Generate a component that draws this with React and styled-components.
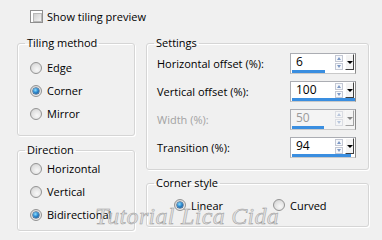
import React from 'react';
import styled, { createGlobalStyle } from 'styled-components';

const Global = createGlobalStyle`
  body { margin: 0; background: #f0f0f0; }
  * { box-sizing: border-box; }
`;

const Dialog = styled.div`
  position: relative; width: 382px; height: 240px; overflow: hidden;
  background: #f0f0f0; padding: 10px 13px 0 17px;
  font-family: "Open Sans", "Noto Sans", sans-serif; font-size: 11px; color: #000;
`;

const CheckRow = styled.label`
  display: flex; align-items: center; gap: 4px; height: 13px; margin-left: 13px;
`;

const CheckBox = styled.span`
  width: 13px; height: 13px; border: 1px solid #8f8f8f; background: #fff; padding: 2px;
  &::after {
    content: ''; display: block; width: 100%; height: 100%;
    background: linear-gradient(135deg, #cfcfcf, #f4f4f4); border: 1px solid #b8b8b8;
  }
`;

const Columns = styled.div`
  display: flex; gap: 11px; margin-top: 13px;
`;

const Column = styled.div`
  display: flex; flex-direction: column; gap: ${p => p.gap}px; width: ${p => p.width}px;
`;

const Group = styled.fieldset`
  margin: 0; padding: 0; min-width: 0;
  border: 1px solid #d5d5d5; border-radius: 3px;
  box-shadow: inset 1px 1px 0 #fff, 1px 1px 0 #fff;
`;

const Legend = styled.legend`
  margin: 0 0 0 7px; padding: 0 2px; line-height: 14px; height: 14px;
`;

const GroupBody = styled.div`
  padding: ${p => p.pad};
`;

const RadioRow = styled.label`
  display: flex; align-items: center; gap: 5px; height: ${p => p.h || 23}px;
  width: ${p => (p.w ? `${p.w}px` : 'auto')};
`;

const Radio = styled.span`
  position: relative; width: 12px; height: 12px; border-radius: 50%; flex: none;
  border: 1px solid #939393;
  background: radial-gradient(circle at 60% 65%, #f8f8f8 0%, #e2e2e2 55%, #c9c9c9 100%);
  &::after {
    content: ''; position: absolute; left: 2px; top: 2px; width: 6px; height: 6px; border-radius: 50%;
    display: ${p => (p.checked ? 'block' : 'none')};
    background: radial-gradient(circle at 40% 35%, #8fe0ff 0%, #2d8ad0 45%, #0d3f78 100%);
    box-shadow: 0 0 0 0.5px #0e3a6a;
  }
`;

const Inline = styled.div`
  display: flex; align-items: center;
`;

const SettingRow = styled.div`
  display: flex; align-items: center; justify-content: space-between; height: 21px;
  color: ${p => (p.disabled ? '#a2a2a2' : '#000')};
`;

const Rows = styled.div`
  display: flex; flex-direction: column; gap: 7px;
`;

const Spin = styled.div`
  position: relative; width: 66px; height: 21px; display: flex; align-items: center;
  border: 1px solid #abadb3; border-right-color: #8a8a8a; border-bottom-color: #c9c9c9;
  background: ${p => (p.disabled ? '#f4f4f4' : '#fff')};
  color: ${p => (p.disabled ? '#9a9a9a' : '#000')};
  font-size: 12px; padding: 0 0 3px 5px;
`;

const SpinValue = styled.span`
  flex: 1; line-height: 16px;
`;

const Arrows = styled.div`
  display: flex; flex-direction: column; gap: 1px; width: 8px; margin-right: 2px;
  opacity: ${p => (p.disabled ? 0.5 : 1)};
`;

const ArrowBtn = styled.span`
  display: flex; align-items: center; justify-content: center;
  width: 8px; height: 7px; border: 1px solid #c4c8d4; background: #f6f8fb;
  &::after {
    content: ''; border-left: 2.5px solid transparent; border-right: 2.5px solid transparent;
    ${p => (p.down ? 'border-top: 3px solid #7d98c4;' : 'border-bottom: 3px solid #7d98c4;')}
  }
`;

const DropBtn = styled.span`
  display: flex; align-items: center; justify-content: center;
  width: 9px; height: 16px; margin-right: 1px; background: #f4f4f4;
  border-top: 1px solid #fff; border-left: 1px solid #fff;
  border-right: 1px solid #404040; border-bottom: 1px solid #404040;
  opacity: ${p => (p.disabled ? 0.45 : 1)};
  &::after {
    content: ''; border-left: 3px solid transparent; border-right: 3px solid transparent;
    border-top: 3px solid #000;
  }
`;

const Bar = styled.span`
  position: absolute; left: 1px; bottom: 0; height: 3px; background: #3a8ee0;
`;

const Watermark = styled.div`
  position: absolute; left: 95px; top: 203px;
  font-family: "Liberation Serif", serif; font-style: italic; font-size: 24px;
  letter-spacing: 0.3px; color: rgba(215, 215, 215, 0.55);
  -webkit-text-stroke: 0.5px #9a9a9a;
  pointer-events: none;
`;

const settings = [
  { label: 'Horizontal offset (%):', value: 6, min: -100, max: 100 },
  { label: 'Vertical offset (%):', value: 100, min: 0, max: 100 },
  { label: 'Width (%):', value: 50, min: 0, max: 100, disabled: true },
  { label: 'Transition (%):', value: 94, min: 0, max: 100 },
];

function SpinField({ value, min, max, disabled }) {
  const w = Math.round(((value - min) / (max - min)) * 63);
  return (
    <Spin disabled={disabled}>
      <SpinValue>{value}</SpinValue>
      <Arrows disabled={disabled}>
        <ArrowBtn />
        <ArrowBtn down />
      </Arrows>
      <DropBtn disabled={disabled} />
      <Bar style={{ width: w }} />
    </Spin>
  );
}

export default function App() {
  return (
    <Dialog>
      <Global />
      <CheckRow><CheckBox />Show tiling preview</CheckRow>
      <Columns>
        <Column width={118} gap={7}>
          <Group>
            <Legend>Tiling method</Legend>
            <GroupBody pad="6px 0 10px 12px">
              <RadioRow><Radio />Edge</RadioRow>
              <RadioRow><Radio checked />Corner</RadioRow>
              <RadioRow><Radio />Mirror</RadioRow>
            </GroupBody>
          </Group>
          <Group>
            <Legend>Direction</Legend>
            <GroupBody pad="0 0 4px 12px">
              <RadioRow><Radio />Horizontal</RadioRow>
              <RadioRow><Radio />Vertical</RadioRow>
              <RadioRow><Radio checked />Bidirectional</RadioRow>
            </GroupBody>
          </Group>
        </Column>
        <Column width={223} gap={6}>
          <Group>
            <Legend>Settings</Legend>
            <GroupBody pad="3px 12px 11px 10px">
              <Rows>
                {settings.map(s => (
                  <SettingRow key={s.label} disabled={s.disabled}>
                    <span>{s.label}</span>
                    <SpinField {...s} />
                  </SettingRow>
                ))}
              </Rows>
            </GroupBody>
          </Group>
          <Group>
            <Legend>Corner style</Legend>
            <GroupBody pad="4px 0 10px 27px">
              <Inline>
                <RadioRow h={22} w={99}><Radio checked />Linear</RadioRow>
                <RadioRow h={22}><Radio />Curved</RadioRow>
              </Inline>
            </GroupBody>
          </Group>
        </Column>
      </Columns>
      <Watermark>Tutorial Lica Cida</Watermark>
    </Dialog>
  );
}
